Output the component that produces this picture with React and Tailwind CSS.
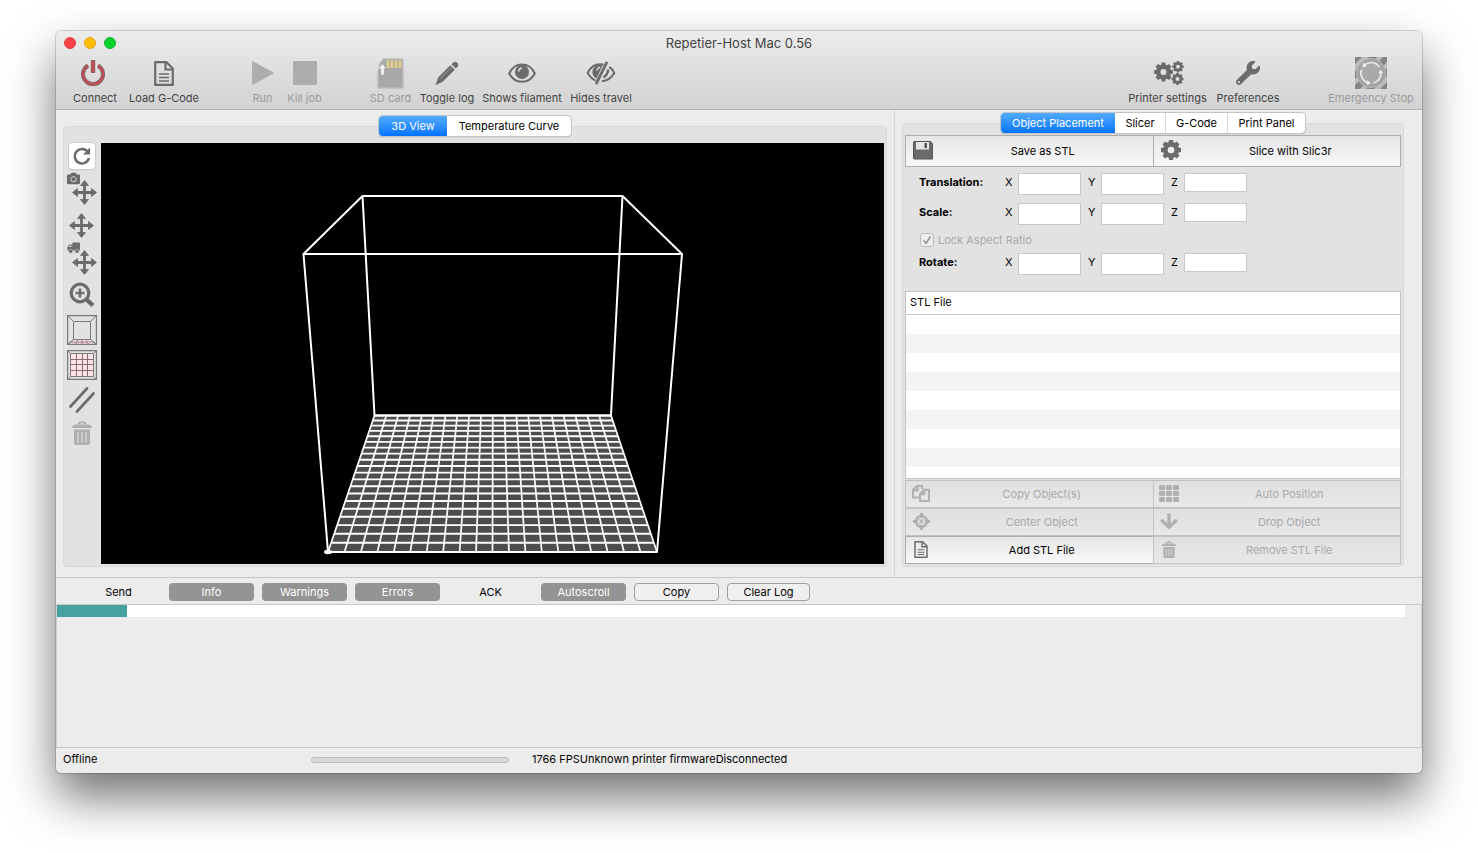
import React from "react";
import { FaWrench, FaCamera } from "react-icons/fa";

function PowerIcon() {
  return (
    <svg width="24" height="26" viewBox="0 0 24 26" fill="none" stroke="#bd4f57" strokeLinecap="butt" className="mr-1">
      <path d="M7 5.6A10 10 0 1 0 17 5.6" stroke="#777" strokeWidth="4.2" />
      <path d="M7 5.6A10 10 0 1 0 17 5.6" strokeWidth="2.8" />
      <path d="M12 0v13" stroke="#8b6a6c" strokeWidth="4.4" />
      <path d="M12 1v11.400" strokeWidth="3" />
    </svg>
  );
}

function FileIcon({ w = 20, h = 25 }) {
  return (
    <svg width={w} height={h} viewBox="0 0 20 25" fill="none" stroke="currentColor" strokeWidth="2.200">
      <path d="M1.200 1.200H12.500L18.800 7.500V23.800H1.200Z" strokeLinejoin="round" />
      <path d="M11.500 1.500V8.500H18.500" />
      <path d="M5 13h10M5 16.500h10M5 20h10" strokeWidth="1.500" />
    </svg>
  );
}

function PlayIcon() {
  return (
    <svg width="22" height="24" viewBox="0 0 22 24" fill="#adadad">
      <path d="M0.500 0.500L21.500 12L0.500 23.500Z" stroke="#adadad" strokeLinejoin="round" />
    </svg>
  );
}

function StopIcon() {
  return (
    <svg width="24" height="24" viewBox="0 0 24 24">
      <rect width="24" height="24" rx="1" fill="#adadad" />
    </svg>
  );
}

function SdIcon() {
  return (
    <svg width="27" height="31" viewBox="0 0 27 31">
      <path d="M6.500 1H25a1 1 0 0 1 1 1V30H1V13L2.500 11V6Z" fill="#a8a8a8" stroke="#bcbcbc" strokeWidth="1.500" />
      <path d="M11 2.500v7.500M15 2.500v7.500M19 2.500v7.500M23 2.500v7.500" stroke="#e3cf85" strokeWidth="2.700" />
      <path d="M5.500 6L8.700 10.500H6.900V16.500H4.100V10.500H2.300Z" fill="#f4f4f4" />
    </svg>
  );
}

function PencilIcon() {
  return (
    <svg width="24" height="25" viewBox="0 0 24 25" fill="currentColor">
      <path d="M15.300 4.200L19.800 8.700L7.600 20.800L0.500 24.200L3.200 16.400Z" />
      <path d="M16.500 3.200L18.600 1.200Q20.400 0 22.400 1.800Q24 3.600 22.800 5.300L20.800 7.400Z" />
      <path d="M5.500 17.500L17 6" stroke="#aaa" strokeWidth="0.800" />
    </svg>
  );
}

function EyeIcon() {
  return (
    <svg width="28" height="20" viewBox="0 0 28 20" fill="none" stroke="currentColor" strokeWidth="2">
      <path d="M1.200 10.500C6.500 -1.500 21.500 -1.500 26.800 10.500C21 21.500 7 21.500 1.200 10.500Z" />
      <circle cx="14" cy="9" r="7" fill="currentColor" stroke="none" />
      <path d="M10.400 8.600Q10.800 5.400 14 5" stroke="#ddd" strokeWidth="1.300" />
    </svg>
  );
}

function EyeOffIcon() {
  return (
    <svg width="30" height="24" viewBox="0 0 30 24" fill="none" stroke="currentColor" strokeWidth="2">
      <path d="M17.500 3.500Q6.500 1.500 1.700 12Q5 17.800 9.700 19.600" />
      <path d="M16.500 4.500A7 7 0 1 0 10.500 17.500Z" fill="currentColor" stroke="none" />
      <path d="M11 9.500Q11.500 6.800 14.300 6.200" stroke="#ddd" strokeWidth="1.300" />
      <path d="M21 0.800L10 23.200" strokeWidth="2.800" />
      <path d="M23.300 5.800Q26.700 8 28.300 12Q24 19.500 15.800 20.300" />
      <path d="M22.200 8.500Q21.800 13.500 17.500 16.500" strokeWidth="2.600" />
    </svg>
  );
}

function EmergencyIcon() {
  return (
    <svg width="32" height="32" viewBox="0 0 32 32">
      <rect width="32" height="32" fill="#bdbdbd" />
      <path d="M0 0H7L0 7ZM14 0H22L0 22V14ZM28 0H32V5L5 32H0V28ZM32 11V19L19 32H11ZM32 25V32H25Z" fill="#858585" />
      <circle cx="16" cy="16" r="14.500" fill="#a2a2a2" stroke="#b8b8b8" />
      <circle cx="16" cy="16" r="10.500" fill="#a9a9a9" />
      <g fill="none" stroke="#e6e6e6" strokeWidth="1.800">
        <path d="M9 8.300A10.200 10.200 0 0 1 24.500 10.300" />
        <path d="M26 14.500A10.200 10.200 0 0 1 18.500 26" />
        <path d="M14 26A10.200 10.200 0 0 1 6.500 12.500" />
      </g>
      <path d="M7.500 10.500L8 5.500L12 9.300ZM28 16L25.500 12.500L23.300 16.800ZM12.500 23.200L16 26.500L11.500 28Z" fill="#eee" />
    </svg>
  );
}

function GearShape({ cx, cy, r }) {
  return (
    <g transform={`translate(${cx} ${cy}) scale(${r / 10})`}>
      <circle r="5.600" fill="none" stroke="currentColor" strokeWidth="4.600" />
      {[0, 45, 90, 135, 180, 225, 270, 315].map((a) => (
        <path key={a} transform={`rotate(${a})`} d="M-2.700 -6.500L-1.900 -10H1.900L2.700 -6.500Z" fill="currentColor" />
      ))}
    </g>
  );
}

function GearIcon() {
  return (
    <svg width="20" height="20" viewBox="0 0 20 20">
      <GearShape cx={10} cy={10} r={10} />
    </svg>
  );
}

function GearsIcon() {
  return (
    <svg width="30" height="24" viewBox="0 0 30 24" className="ml-0.5">
      <GearShape cx={9.5} cy={11} r={9.4} />
      <GearShape cx={24} cy={5.7} r={5.7} />
      <GearShape cx={23.5} cy={18} r={6} />
    </svg>
  );
}

function MoveIcon({ className }) {
  return (
    <svg width="25" height="25" viewBox="0 0 25 25" className={className}>
      <path d="M12.500 4V21M4 12.500H21" stroke="currentColor" strokeWidth="2.800" />
      <path
        d="M12.500 0.500L16.500 5.500H8.500ZM12.500 24.500L8.500 19.500H16.500ZM0.500 12.500L5.500 8.500V16.500ZM24.500 12.500L19.500 16.500V8.500Z"
        fill="currentColor"
        stroke="currentColor"
        strokeWidth="0.800"
        strokeLinejoin="round"
      />
    </svg>
  );
}

function TruckIcon() {
  return (
    <svg width="14" height="12" viewBox="0 0 14 12" fill="currentColor">
      <path d="M5.500 0.500H12.500Q13 0.500 13 1V8.500H0.500V5L2.500 2.500H5.500Z" />
      <path d="M1.800 5L3 3.600H4.500V5Z" fill="#dcdcdc" />
      <circle cx="3.700" cy="9.200" r="2" stroke="#ddd" strokeWidth="0.500" />
      <circle cx="10" cy="9.200" r="2" stroke="#ddd" strokeWidth="0.500" />
    </svg>
  );
}

function DownIcon() {
  return (
    <svg width="18" height="17" viewBox="0 0 18 17" fill="none" stroke="currentColor" strokeWidth="3.400">
      <path d="M9 0.500V13" />
      <path d="M2.200 7.800L9 14.200L15.800 7.800" strokeLinecap="round" />
    </svg>
  );
}

function ReloadIcon() {
  return (
    <svg width="18" height="18" viewBox="0 0 18 18" fill="none" stroke="currentColor" strokeWidth="2.500">
      <path d="M15 5.200A7.200 7.200 0 1 0 16 11" />
      <path d="M17 0.500V7.500H10Z" fill="currentColor" stroke="none" />
    </svg>
  );
}

function MagnifierIcon() {
  return (
    <svg width="26" height="26" viewBox="0 0 26 26" fill="none" stroke="currentColor">
      <circle cx="11" cy="11" r="8.800" strokeWidth="3.200" />
      <path d="M17.500 17.500L24 23.500" strokeWidth="4.400" />
      <path d="M6.500 11h9M11 6.500v9" strokeWidth="2.600" />
    </svg>
  );
}

function FrontViewIcon() {
  return (
    <svg width="30" height="30" viewBox="0 0 30 30" fill="none" stroke="#7a7a7a">
      <path d="M6.500 24.500H23.500L29 29.500H1Z" fill="#fbe3e8" />
      <path d="M0.500 0.500H29.500V29.500H0.500Z" strokeWidth="1.400" />
      <path d="M6.500 6.500H23.500V24.500H6.500ZM0.500 0.500L6.500 6.500M29.500 0.500L23.500 6.500M0.500 29.500L6.500 24.500M29.500 29.500L23.500 24.500" />
      <path d="M3.500 27H26.500M11 24.500L8.500 29.500M15 24.500V29.500M19 24.500L21.500 29.500" stroke="#a08088" />
    </svg>
  );
}

function TopViewIcon() {
  return (
    <svg width="30" height="30" viewBox="0 0 30 30" fill="none" stroke="#7a7a7a">
      <path d="M0.500 0.500H29.500V29.500H0.500Z" strokeWidth="1.400" />
      <path d="M0.500 0.500L3.500 3.500M29.500 0.500L26.500 3.500M0.500 29.500L3.500 26.500M29.500 29.500L26.500 26.500" />
      <path d="M3.500 3.500H26.500V26.500H3.500Z" fill="#fbe3e8" />
      <path d="M9.500 3.500V26.500M15.500 3.500V26.500M20.500 3.500V26.500M3.500 9.500H26.500M3.500 14.500H26.500M3.500 20.500H26.500" stroke="#8e6a72" />
    </svg>
  );
}

function ParallelIcon() {
  return (
    <svg width="26" height="26" viewBox="0 0 26 26" stroke="currentColor" strokeWidth="2.600" strokeLinecap="round">
      <path d="M1.500 19.500L18 1.500M8 24.500L24.500 6.500" />
    </svg>
  );
}

function TrashIcon({ w = 20, h = 24 }) {
  return (
    <svg width={w} height={h} viewBox="0 0 20 24" fill="none" stroke="currentColor">
      <path d="M6.500 3.500Q6.500 1.200 10 1.200Q13.500 1.200 13.500 3.500" strokeWidth="2" />
      <path d="M0 7Q0 3.500 4 3.500H16Q20 3.500 20 7Z" fill="currentColor" stroke="none" />
      <path d="M2 8.500H18V22Q18 24 16 24H4Q2 24 2 22Z" fill="currentColor" stroke="none" />
      <path d="M6 11V21.500M10 11V21.500M14 11V21.500" stroke="#dedede" strokeWidth="1.200" />
    </svg>
  );
}

function SaveIcon() {
  return (
    <svg width="20" height="19" viewBox="0 0 20 19">
      <path d="M1 0.500H17.500L19.500 2.500V18H1L0.500 17V1Z" fill="#6b6b6b" stroke="#555" />
      <path d="M3 1H16V8.500H3Z" fill="#e4e4e4" />
      <path d="M11.500 2H14V7H11.500Z" fill="#555" />
    </svg>
  );
}

function CopyIcon() {
  return (
    <svg width="18" height="17" viewBox="0 0 18 17" fill="none" stroke="currentColor" strokeWidth="2">
      <path d="M8 12.500H1V5L5 1H10V4M5.500 1V5.500H1" />
      <path d="M8 9L12 4.800H17V16H8ZM12.300 5V9.300H8" />
    </svg>
  );
}

function TargetIcon() {
  return (
    <svg width="17" height="17" viewBox="0 0 17 17" fill="none" stroke="currentColor">
      <circle cx="8.500" cy="8.500" r="5.500" strokeWidth="2.400" />
      <path d="M8.500 0V5M8.500 12V17M0 8.500H5M12 8.500H17" strokeWidth="3" />
      <path d="M6.200 6.200L10.800 10.800M10.800 6.200L6.200 10.800" strokeWidth="1.200" />
    </svg>
  );
}

function GridIcon() {
  return (
    <svg width="20" height="17" viewBox="0 0 20 17" fill="currentColor">
      {[0, 6, 12].map((y) => [0, 7, 14].map((x) => <rect key={x + "-" + y} x={x} y={y} width="6" height="5" rx="1.200" />))}
    </svg>
  );
}

function MoveWithBadge({ children }) {
  return (
    <span className="relative block h-7 w-[30px] shrink-0">
      <MoveIcon className="absolute top-1 left-[5px]" />
      <span className="absolute -top-1 left-0">{children}</span>
    </span>
  );
}

function BuildVolume() {
  const lines = [];
  const front = { y: 409, l: 227, r: 556 };
  const back = { y: 272.5, l: 273.5, r: 510 };
  const fw = front.r - front.l;
  const bw = back.r - back.l;
  for (let i = 0; i <= 20; i++) {
    const t = i / 20;
    lines.push(<line key={"c" + i} x1={front.l + fw * t} y1={front.y} x2={back.l + bw * t} y2={back.y} />);
    const w = 1 / (1 / fw + t * (1 / bw - 1 / fw));
    const k = (fw - w) / (fw - bw);
    const y = front.y + (back.y - front.y) * k;
    lines.push(
      <line key={"r" + i} x1={front.l + (back.l - front.l) * k} y1={y} x2={front.r + (back.r - front.r) * k} y2={y} strokeWidth="1.900" />
    );
  }
  return (
    <svg className="min-h-[421px] w-full min-w-0 flex-1 bg-black" viewBox="0 0 783 421" role="img" aria-label="3D View">
      <polygon points="227,409 556,409 510,272.5 273.5,272.5" fill="#4d4d4d" />
      <g stroke="#fff" strokeWidth="1.700">{lines}</g>
      <g stroke="#fff" strokeWidth="2" fill="none" strokeLinejoin="round">
        <path d="M202.500 111H581L521.500 53H261.500Z" />
        <path d="M202.500 111L227 409H556L581 111M261.500 53L273.500 272.500H510L521.500 53" />
      </g>
      <ellipse cx="227" cy="409" rx="4" ry="2.200" fill="#fff" />
    </svg>
  );
}

function ToolItem({ label, width, disabled, children }) {
  return (
    <button type="button" disabled={disabled} className={`flex flex-col items-center ${width} ${disabled ? "text-[#9b9b9b]" : "text-[#444]"}`}>
      <span className="flex h-8 items-center text-[#6b6b6b]">{children}</span>
      <span className="mt-px text-[11px] leading-4 whitespace-nowrap">{label}</span>
    </button>
  );
}

function Tabs({ items, height }) {
  return (
    <div role="tablist" className={`relative z-10 -mb-2.5 flex self-center overflow-hidden rounded-[4px] bg-white shadow-[0_0_0_1px_#c4c4c4,0_1px_1px_#888] ${height}`}>
      {items.map(([label, width], i) => (
        <button
          key={label}
          type="button"
          role="tab"
          aria-selected={i === 0}
          className={`${width} ${i === 0 ? "bg-linear-to-b from-[#50acfd] to-[#0072ff] text-white" : i > 1 ? "border-l border-[#d9d9d9]" : ""}`}
        >
          {label}
        </button>
      ))}
    </div>
  );
}

function PanelButton({ icon, label, disabled, tall }) {
  return (
    <button
      type="button"
      disabled={disabled}
      className={`-mr-px flex items-center border bg-linear-to-b ${tall ? "h-8 pl-[7px]" : "h-7 pl-[5px]"} ${
        disabled ? "border-[#c2c2c2] from-[#e0e0e0] to-[#e8e8e8] text-[#a9a9a9]" : "border-[#adadad] from-[#e6e6e6] to-[#f8f8f8] text-black"
      }`}
    >
      <span className={`flex w-5 justify-center pb-0.5 ${disabled ? "text-[#b0b0b0]" : "text-[#6b6b6b]"}`}>{icon}</span>
      <span className="flex-1">{label}</span>
    </button>
  );
}

function AxisRow({ name }) {
  return (
    <div className="grid h-[22px] grid-cols-[86px_13px_70px_13px_70px_13px_63px]">
      <span className="font-bold leading-[18px]">{name}:</span>
      {["X", "Y", "Z"].map((axis) => (
        <React.Fragment key={axis}>
          <label htmlFor={name + axis} className="leading-[18px]">{axis}</label>
          <input
            id={name + axis}
            type="text"
            className={`w-[63px] border border-[#c8c8c8] bg-white px-1 ${axis === "Z" ? "h-[19px]" : "h-[22px]"}`}
          />
        </React.Fragment>
      ))}
    </div>
  );
}

const sideTools = [
  ["Move camera", <MoveWithBadge><FaCamera size={13} /></MoveWithBadge>],
  ["Move viewpoint", <MoveIcon />],
  ["Move object", <MoveWithBadge><TruckIcon /></MoveWithBadge>],
  ["Zoom", <MagnifierIcon />],
  ["Front view", <FrontViewIcon />],
  ["Top view", <TopViewIcon />],
  ["Parallel projection", <ParallelIcon />],
];

const logButtons = [
  ["Send", "plain"],
  ["Info", "on"],
  ["Warnings", "on"],
  ["Errors", "on"],
  ["ACK", "plain"],
  ["Autoscroll", "on"],
  ["Copy", "push"],
  ["Clear Log", "push"],
];

export default function App() {
  return (
    <div className="flex min-h-screen flex-col bg-white px-14 pt-[31px] pb-20 font-['Inter','Liberation_Sans',sans-serif] text-[11px] text-black">
      <div className="flex flex-1 flex-col overflow-hidden rounded-[5px] bg-[#ececec] shadow-[0_0_0_1px_rgba(0,0,0,0.15),0_24px_48px_rgba(0,0,0,0.56)]">
        <header className="border-b border-[#b1b1b1] bg-linear-to-b from-[#ececec] to-[#d2d2d2]">
          <div className="grid h-6 grid-cols-[1fr_auto_1fr] items-center px-2">
            <div className="flex gap-2">
              <button type="button" aria-label="Close" className="size-3 rounded-full border border-[#e33e41] bg-[#fc4348]" />
              <button type="button" aria-label="Minimize" className="size-3 rounded-full border border-[#e2a417] bg-[#fdbc05]" />
              <button type="button" aria-label="Zoom window" className="size-3 rounded-full border border-[#17b230] bg-[#05d32c]" />
            </div>
            <h1 className="text-[13px] leading-4 text-[#444]">Repetier-Host Mac 0.56</h1>
          </div>
          <div className="flex h-[54px] items-start pt-0.5 pr-2 pl-[17px]">
            <div className="flex gap-3">
              <ToolItem label="Connect" width="w-11"><PowerIcon /></ToolItem>
              <ToolItem label="Load G-Code" width="w-[70px]"><FileIcon /></ToolItem>
            </div>
            <div className="ml-[51px] flex gap-3">
              <ToolItem label="Run" width="w-[25px]" disabled><PlayIcon /></ToolItem>
              <ToolItem label="Kill job" width="w-[35px]" disabled><StopIcon /></ToolItem>
            </div>
            <div className="ml-[47px] flex gap-[7px]">
              <ToolItem label="SD card" width="w-[43px]" disabled><SdIcon /></ToolItem>
              <ToolItem label="Toggle log" width="w-14"><PencilIcon /></ToolItem>
              <ToolItem label="Shows filament" width="w-20"><EyeIcon /></ToolItem>
              <ToolItem label="Hides travel" width="w-16"><EyeOffIcon /></ToolItem>
            </div>
            <div className="ml-auto flex gap-2">
              <ToolItem label="Printer settings" width="w-[81px]"><GearsIcon /></ToolItem>
              <ToolItem label="Preferences" width="w-16"><FaWrench size={24} /></ToolItem>
            </div>
            <div className="ml-12 flex">
              <ToolItem label="Emergency Stop" width="w-[86px]" disabled><EmergencyIcon /></ToolItem>
            </div>
          </div>
        </header>

        <main className="flex flex-1">
          <section className="flex min-w-0 flex-1 flex-col border-r border-[#d6d6d6] pt-1.5 pr-[7px] pb-2.5 pl-[7px]">
            <Tabs height="h-5" items={[["3D View", "w-[68px]"], ["Temperature Curve", "w-[124px]"]]} />
            <div className="flex flex-1 rounded-[4px] border border-[#d9d9d9] bg-[#e2e2e2] pt-4 pr-0.5 pb-0.5">
              <div className="flex w-[37px] shrink-0 flex-col items-center gap-[7px] pr-0.5 text-[#6b6b6b]">
                <button type="button" aria-label="Rotate" className="flex h-[26px] w-[26px] items-center justify-center rounded-[4px] bg-white shadow-[0_0_0_1px_#ccc,0_1px_1px_#aaa]">
                  <ReloadIcon />
                </button>
                {sideTools.map(([label, icon]) => (
                  <button key={label} type="button" aria-label={label} className="flex h-7 w-[30px] items-center justify-center [&>svg]:shrink-0">
                    {icon}
                  </button>
                ))}
                <button type="button" disabled aria-label="Delete" className="flex h-6 w-[30px] items-center justify-center text-[#b0b0b0]">
                  <TrashIcon />
                </button>
              </div>
              <BuildVolume />
            </div>
          </section>

          <section className="flex w-[527px] shrink-0 flex-col pt-[3px] pr-[18px] pb-2.5 pl-[7px]">
            <Tabs
              height="h-5"
              items={[["Object Placement", "w-[114px]"], ["Slicer", "w-[50px]"], ["G-Code", "w-[62px]"], ["Print Panel", "w-[78px]"]]}
            />
            <div className="flex flex-1 flex-col rounded-[4px] border border-[#d9d9d9] bg-[#e2e2e2] px-0.5 pt-[11px] pb-0.5">
              <div className="grid grid-cols-2 pr-px">
                <PanelButton tall icon={<SaveIcon />} label="Save as STL" />
                <PanelButton tall icon={<GearIcon />} label="Slice with Slic3r" />
              </div>
              <div className="flex flex-col gap-2 pt-1.5 pl-3.5">
                <AxisRow name="Translation" />
                <AxisRow name="Scale" />
                <div className="-mb-0.5 flex h-3.5 items-center">
                  <label className="flex items-center gap-1 pl-px text-[#a9a9a9]">
                    <span className="grid">
                      <input
                        type="checkbox"
                        defaultChecked
                        disabled
                        className="col-start-1 row-start-1 size-3.5 appearance-none rounded-[3px] border border-[#bcbcbc] bg-[#eeeeee]"
                      />
                      <svg className="pointer-events-none col-start-1 row-start-1" width="14" height="14" viewBox="0 0 14 14" fill="none" stroke="#909090" strokeWidth="1.600">
                        <path d="M3.500 7.500L6 10.300L10.500 3.500" />
                      </svg>
                    </span>
                    Lock Aspect Ratio
                  </label>
                </div>
                <AxisRow name="Rotate" />
              </div>
              <div className="mt-4 h-[188px] overflow-hidden border border-[#c4c4c4] bg-white">
                <table className="w-full border-collapse">
                  <thead>
                    <tr className="h-[22px] border-b border-[#c8c8c8]">
                      <th className="pb-0.5 pl-1 text-left leading-5 font-normal">STL File</th>
                    </tr>
                  </thead>
                  <tbody>
                    {Array.from({ length: 9 }, (_, i) => (
                      <tr key={i} className="h-[19px] even:bg-[#f4f4f4]">
                        <td />
                      </tr>
                    ))}
                  </tbody>
                </table>
              </div>
              <div className="mt-px grid grid-cols-2 pr-px">
                <PanelButton disabled icon={<CopyIcon />} label="Copy Object(s)" />
                <PanelButton disabled icon={<GridIcon />} label="Auto Position" />
                <PanelButton disabled icon={<TargetIcon />} label="Center Object" />
                <PanelButton disabled icon={<DownIcon />} label="Drop Object" />
                <PanelButton icon={<FileIcon w={14} h={17} />} label="Add STL File" />
                <PanelButton disabled icon={<TrashIcon w={14} h={17} />} label="Remove STL File" />
              </div>
            </div>
          </section>
        </main>

        <div className="flex h-7 items-center gap-2 border-t border-b border-[#c8c8c8] pt-0.5 pl-5">
          {logButtons.map(([label, kind]) => (
            <button
              key={label}
              type="button"
              className={`h-[18px] rounded-[4px] leading-4 ${label === "Clear Log" ? "w-[83px]" : "w-[85px]"} ${
                kind === "on" ? "bg-[#949494] text-white" : kind === "push" ? "border border-[#a0a0a0] bg-[#efefef]" : ""
              }`}
            >
              {label}
            </button>
          ))}
        </div>
        <div className="h-[142px] border-r border-l border-[#d0d0d0] pr-4">
          <div className="h-3 bg-white">
            <div className="h-3 w-[70px] bg-[#48a1a1]" />
          </div>
        </div>
        <footer className="flex h-[26px] items-center border-t border-[#c8c8c8] pb-0.5 pl-[7px]">
          <span className="w-[248px]">Offline</span>
          <div role="progressbar" aria-label="Progress" className="h-1.5 w-[198px] rounded-full border border-[#bcbcbc] bg-[#d9d9d9]" />
          <span className="pl-[23px]">1766 FPSUnknown printer firmwareDisconnected</span>
        </footer>
      </div>
    </div>
  );
}
